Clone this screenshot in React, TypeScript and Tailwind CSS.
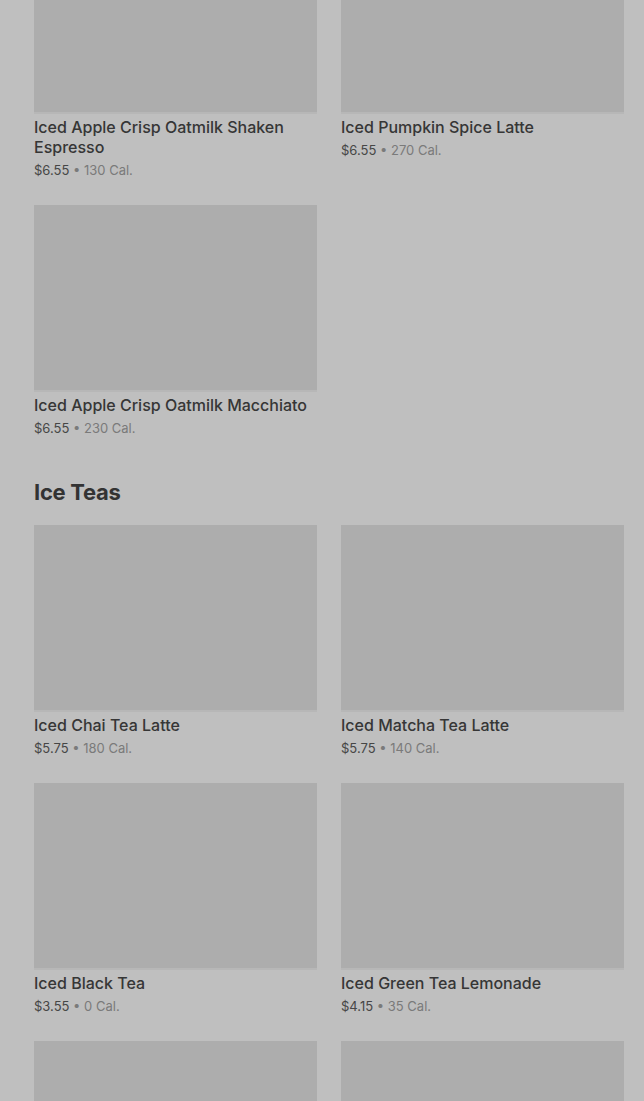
import React from "react";

interface Item {
  name?: string;
  price?: string;
  cal?: string;
}

const sections: { title?: string; items: Item[] }[] = [
  {
    items: [
      { name: "Iced Apple Crisp Oatmilk Shaken Espresso", price: "$6.55", cal: "130 Cal." },
      { name: "Iced Pumpkin Spice Latte", price: "$6.55", cal: "270 Cal." },
      { name: "Iced Apple Crisp Oatmilk Macchiato", price: "$6.55", cal: "230 Cal." },
    ],
  },
  {
    title: "Ice Teas",
    items: [
      { name: "Iced Chai Tea Latte", price: "$5.75", cal: "180 Cal." },
      { name: "Iced Matcha Tea Latte", price: "$5.75", cal: "140 Cal." },
      { name: "Iced Black Tea", price: "$3.55", cal: "0 Cal." },
      { name: "Iced Green Tea Lemonade", price: "$4.15", cal: "35 Cal." },
      // next row is cut off by the viewport, only the images show
      {},
      {},
    ],
  },
];

function Card({ item }: { item: Item }) {
  return (
    <div className="flex flex-col">
      <div className="h-[187px] bg-[#adadad] border-b-[2px] border-[#b7b7b7]" />
      {item.name && (
        <>
          <div className="mt-[3px] text-[16px] leading-[20px] font-medium text-[#363636]">{item.name}</div>
          <div className="mt-[3px] text-[13px] leading-[20px]">
            <span className="text-[#464646]">{item.price}</span>
            <span className="text-[#7a7a7a]"> • {item.cal}</span>
          </div>
        </>
      )}
    </div>
  );
}

export default function App() {
  return (
    <div
      className="w-[644px] h-[1101px] overflow-hidden bg-[#bfbfbf]"
      style={{ fontFamily: "Inter, 'Liberation Sans', sans-serif" }}
    >
      <div className="-mt-[73px] pl-[34px] pr-[20px] flex flex-col gap-[40px]">
        {sections.map((s, i) => (
          <div key={i} className="flex flex-col">
            {s.title && (
              <h2 className="text-[22px] leading-[28px] font-bold text-[#333333] tracking-[-0.3px] mb-[19px]">
                {s.title}
              </h2>
            )}
            <div className="grid grid-cols-2 gap-x-[24px] gap-y-[25px] items-start">
              {s.items.map((it, j) => (
                <Card key={j} item={it} />
              ))}
            </div>
          </div>
        ))}
      </div>
    </div>
  );
}
